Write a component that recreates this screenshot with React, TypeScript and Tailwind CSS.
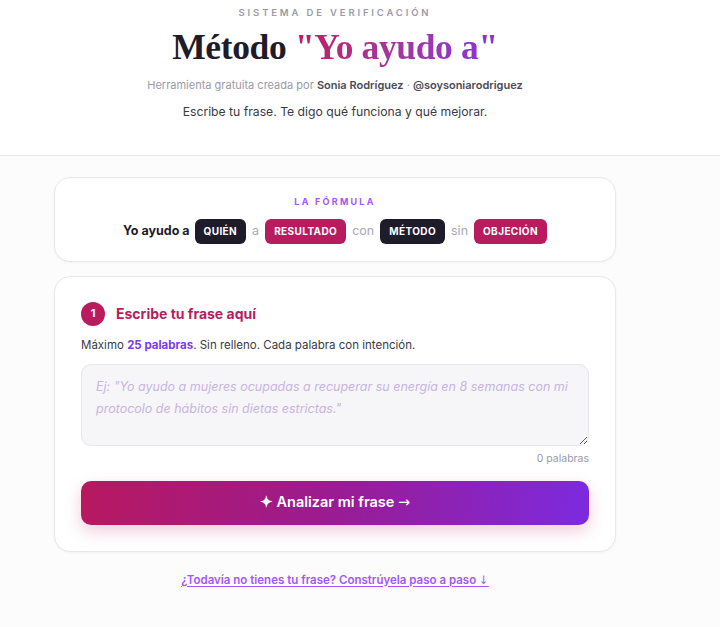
import { useState } from 'react';

// ── Formula pieces: dark pills for who/method, crimson for result/objection ──
const formula = [
  { kind: 'pill', label: 'QUIÉN', tone: 'dark' },
  { kind: 'word', label: 'a' },
  { kind: 'pill', label: 'RESULTADO', tone: 'pink' },
  { kind: 'word', label: 'con' },
  { kind: 'pill', label: 'MÉTODO', tone: 'dark' },
  { kind: 'word', label: 'sin' },
  { kind: 'pill', label: 'OBJECIÓN', tone: 'pink' },
];

export default function App() {
  const [text, setText] = useState('');
  const words = text.trim() ? text.trim().split(/\s+/).length : 0;

  return (
    <div className="min-h-screen bg-[#fcfcfd] font-['Inter','Liberation_Sans',sans-serif] text-[#1e1b2b]">
      {/* ── Header ── */}
      <header className="bg-white border-b border-[#e8e8ec]">
        <div className="w-[670px] flex flex-col items-center pt-[6px] pb-[34px]">
          <p className="text-[9.5px] font-semibold tracking-[0.3em] text-[#9a9aa8]">SISTEMA DE VERIFICACIÓN</p>
          <h1 className="mt-[6px] font-['Liberation_Serif',serif] font-bold text-[35.5px] leading-[42px] tracking-[-0.01em]">
            Método{' '}
            <span className="bg-gradient-to-r from-[#be185d] to-[#8b2fe0] bg-clip-text text-transparent">"Yo ayudo a"</span>
          </h1>
          <p className="mt-[9px] text-[11px] text-[#9a9aa8]">
            Herramienta gratuita creada por <b className="font-semibold text-[#4b4b58]">Sonia Rodríguez</b> ·{' '}
            <b className="font-semibold text-[#4b4b58]">@soysoniarodriguez</b>
          </p>
          <p className="mt-[9px] text-[12.2px] text-[#3a3a46]">Escribe tu frase. Te digo qué funciona y qué mejorar.</p>
        </div>
      </header>

      <main className="w-[670px] flex flex-col items-center pt-[21px]">
        {/* ── Formula card ── */}
        <section className="w-[562px] rounded-[16px] border border-[#e8e8ec] bg-white shadow-[0_1px_3px_rgba(0,0,0,0.04)] pt-[17px] pb-[17px] flex flex-col items-center">
          <p className="text-[9px] font-bold tracking-[0.25em] text-[#a855f7]">LA FÓRMULA</p>
          <div className="mt-[10px] flex items-center gap-[5px] text-[12.5px]">
            <span className="font-bold">Yo ayudo a</span>
            {formula.map((f, i) =>
              f.kind === 'pill' ? (
                <span
                  key={i}
                  className={`h-[25px] px-[9px] flex items-center rounded-[6px] text-[10px] font-bold tracking-[0.04em] text-white ${
                    f.tone === 'dark' ? 'bg-[#1e1b2b]' : 'bg-[#b91c5e]'
                  }`}
                >
                  {f.label}
                </span>
              ) : (
                <span key={i} className="text-[#a8a8b4] px-[1px]">{f.label}</span>
              )
            )}
          </div>
        </section>

        {/* ── Input card ── */}
        <section className="mt-[14px] w-[562px] rounded-[16px] border border-[#e8e8ec] bg-white shadow-[0_1px_3px_rgba(0,0,0,0.04)] px-[26px] pt-[25px] pb-[26px]">
          <div className="flex items-center gap-[11px]">
            <span className="w-[24px] h-[24px] rounded-full bg-[#b91c5e] text-white text-[11px] font-bold flex items-center justify-center">1</span>
            <h2 className="text-[14px] font-bold text-[#b91c5e]">Escribe tu frase aquí</h2>
          </div>
          <p className="mt-[11px] text-[11.5px] text-[#3a3a46]">
            Máximo <b className="font-bold text-[#7c3aed]">25 palabras</b>. Sin relleno. Cada palabra con intención.
          </p>
          <textarea
            value={text}
            onChange={(e) => setText(e.target.value)}
            placeholder={'Ej: "Yo ayudo a mujeres ocupadas a recuperar su energía en 8 semanas con mi protocolo de hábitos sin dietas estrictas."'}
            className="mt-[10px] block w-full h-[82px] rounded-[10px] border border-[#e6e6ec] bg-[#f6f6f9] px-[14px] py-[11px] text-[12.5px] leading-[22px] outline-none placeholder:italic placeholder:text-[#c8b4e0]"
          />
          <p className="mt-[5px] text-right text-[10.5px] text-[#9a9aa8]">{words} palabras</p>
          <button className="mt-[14px] w-full h-[44px] rounded-[10px] bg-[linear-gradient(100deg,#b8185f,#9a1c92_50%,#7c2ae0)] text-white text-[14.5px] font-semibold shadow-[0_6px_16px_rgba(190,24,93,0.22)]">
            ✦ Analizar mi frase <span className="font-['DejaVu_Sans',sans-serif] font-normal">→</span>
          </button>
        </section>

        <a href="#" className="mt-[20px] text-[11.5px] font-semibold text-[#a855f7] underline underline-offset-2">
          ¿Todavía no tienes tu frase? Constrúyela paso a paso <span className="font-['DejaVu_Sans',sans-serif] font-normal">↓</span>
        </a>
      </main>
    </div>
  );
}
